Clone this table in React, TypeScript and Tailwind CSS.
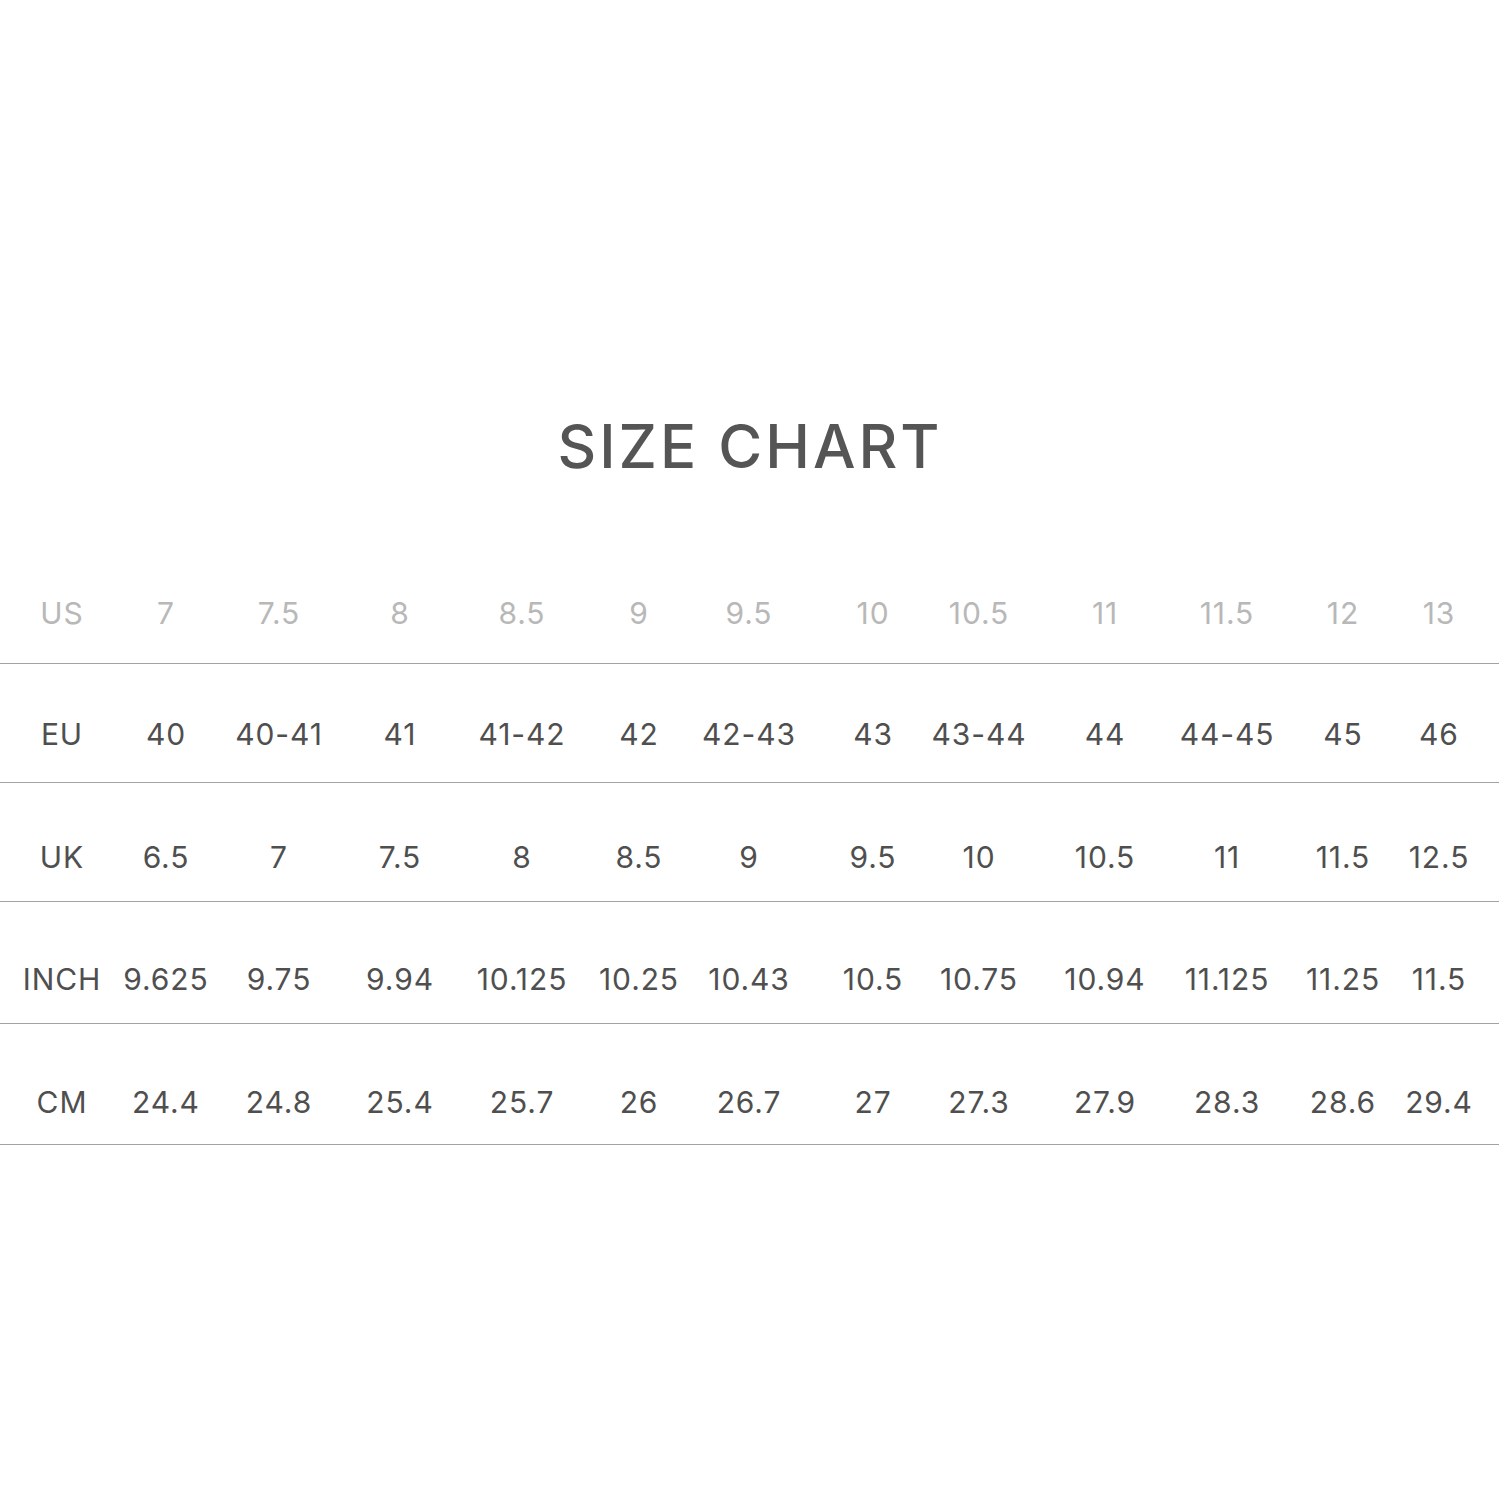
const cols =
  "grid grid-cols-[124px_84px_142px_100px_144px_90px_130px_118px_94px_158px_86px_146px_46px]";

const rows: { label: string; values: string[]; h: string; muted?: boolean }[] = [
  {
    label: "US",
    values: ["7", "7.5", "8", "8.5", "9", "9.5", "10", "10.5", "11", "11.5", "12", "13"],
    h: "h-[121px] pt-[55px]",
    muted: true,
  },
  {
    label: "EU",
    values: ["40", "40-41", "41", "41-42", "42", "42-43", "43", "43-44", "44", "44-45", "45", "46"],
    h: "h-[119px] pt-[55px]",
  },
  {
    label: "UK",
    values: ["6.5", "7", "7.5", "8", "8.5", "9", "9.5", "10", "10.5", "11", "11.5", "12.5"],
    h: "h-[119px] pt-[59px]",
  },
  {
    label: "INCH",
    values: ["9.625", "9.75", "9.94", "10.125", "10.25", "10.43", "10.5", "10.75", "10.94", "11.125", "11.25", "11.5"],
    h: "h-[122px] pt-[62px]",
  },
  {
    label: "CM",
    values: ["24.4", "24.8", "25.4", "25.7", "26", "26.7", "27", "27.3", "27.9", "28.3", "28.6", "29.4"],
    h: "h-[121px] pt-[63px]",
  },
];

export default function App() {
  return (
    <main className="h-[1500px] w-[1500px] bg-white font-['Inter',sans-serif]">
      <h1 className="pt-[416px] text-center text-[60px] font-medium leading-none tracking-[0.05em] text-[#555555]">
        SIZE CHART
      </h1>

      <div className="mt-[67px] w-[1499px]">
        {rows.map((r) => (
          <div
            key={r.label}
            className={`${cols} ${r.h} items-start border-b border-[#a3a3a3] text-[30px] leading-[30px] ${
              r.muted ? "text-[#b8b8b8]" : "text-[#4f4f4f]"
            }`}
          >
            {[r.label, ...r.values].map((v, i) => (
              <div key={i} className="flex justify-center whitespace-nowrap tracking-[0.03em]">
                {v}
              </div>
            ))}
          </div>
        ))}
      </div>
    </main>
  );
}
